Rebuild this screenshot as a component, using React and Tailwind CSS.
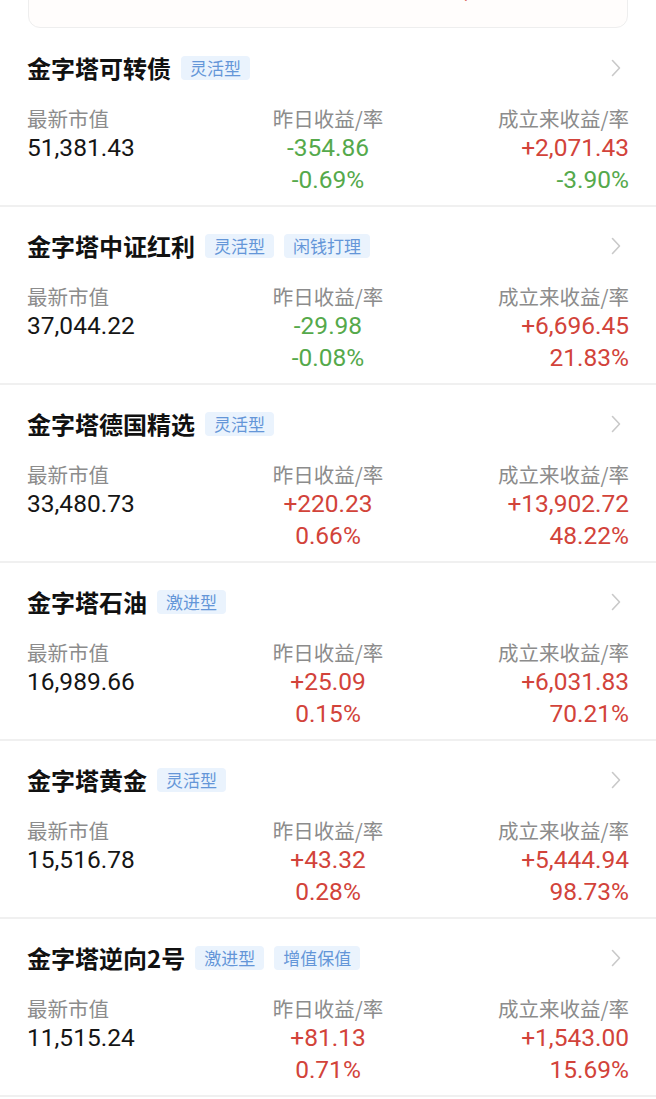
import React from 'react';

const funds = [
    { name: '金字塔可转债', tags: ['灵活型'], value: '51,381.43', day: '-354.86', dayRate: '-0.69%', total: '+2,071.43', totalRate: '-3.90%' },
    { name: '金字塔中证红利', tags: ['灵活型', '闲钱打理'], value: '37,044.22', day: '-29.98', dayRate: '-0.08%', total: '+6,696.45', totalRate: '21.83%' },
    { name: '金字塔德国精选', tags: ['灵活型'], value: '33,480.73', day: '+220.23', dayRate: '0.66%', total: '+13,902.72', totalRate: '48.22%' },
    { name: '金字塔石油', tags: ['激进型'], value: '16,989.66', day: '+25.09', dayRate: '0.15%', total: '+6,031.83', totalRate: '70.21%' },
    { name: '金字塔黄金', tags: ['灵活型'], value: '15,516.78', day: '+43.32', dayRate: '0.28%', total: '+5,444.94', totalRate: '98.73%' },
    { name: '金字塔逆向2号', tags: ['激进型', '增值保值'], value: '11,515.24', day: '+81.13', dayRate: '0.71%', total: '+1,543.00', totalRate: '15.69%' },
];

const numCls = "font-['Roboto','Noto_Sans_CJK_SC',sans-serif] text-[24.5px] leading-[32px]";
const labelCls = 'text-[20.5px] leading-[28px] text-[#8c8c8c]';

const tone = (v) => (v.startsWith('-') ? 'text-[#55a94b]' : 'text-[#d2433a]');

const Chevron = () => (
    <svg width="10" height="18" viewBox="0 0 10 18" fill="none">
        <path d="M1.5 1.5L8.5 9L1.5 16.5" stroke="#c9c9c9" strokeWidth="1.6" strokeLinecap="round" strokeLinejoin="round" />
    </svg>
);

const FundRow = ({ fund }) => (
    <div>
        <div className="px-[27px] pt-[23px] pb-[9px]">
            <div className="flex items-center h-[32px]">
                <span className="text-[24px] font-bold text-[#111111] leading-[32px]">{fund.name}</span>
                <div className="flex gap-[10px] ml-[10px]">
                    {fund.tags.map((t) => (
                        <span key={t} className="h-[24px] px-[9px] rounded-[4px] bg-[#eaf3fd] text-[#6496d8] text-[17px] leading-[24px]">
                            {t}
                        </span>
                    ))}
                </div>
                <div className="ml-auto mr-[8px] flex items-center">
                    <Chevron />
                </div>
            </div>

            <div className="grid grid-cols-3 mt-[20px]">
                <div>
                    <div className={labelCls}>最新市值</div>
                    <div className={`${numCls} text-[#151515]`}>{fund.value}</div>
                </div>
                <div className="text-center">
                    <div className={labelCls}>昨日收益/率</div>
                    <div className={`${numCls} ${tone(fund.day)}`}>{fund.day}</div>
                    <div className={`${numCls} ${tone(fund.dayRate)}`}>{fund.dayRate}</div>
                </div>
                <div className="text-right">
                    <div className={labelCls}>成立来收益/率</div>
                    <div className={`${numCls} ${tone(fund.total)}`}>{fund.total}</div>
                    <div className={`${numCls} ${tone(fund.totalRate)}`}>{fund.totalRate}</div>
                </div>
            </div>
        </div>
        <div className="h-[2px] bg-[#f0f0f0]" />
    </div>
);

export default function App() {
    return (
        <div className="w-[656px] h-[1099px] overflow-hidden bg-white font-['Noto_Sans_CJK_SC','Noto_Sans',sans-serif]">
            {/* summary card, scrolled mostly out of view */}
            <div className="h-[29px] overflow-hidden px-[28px]">
                <div className="-mt-[60px] h-[88px] rounded-[12px] border border-[#eeeeee] bg-[#fffdfc] flex items-end pb-[21px]">
                    <span className={`${numCls} ml-[132px] text-[#7cc06a]`}>-384.84</span>
                    <span className={`${numCls} ml-[180px] text-[#d2433a]`}>+35,871.43</span>
                </div>
            </div>

            {funds.map((f) => (
                <FundRow key={f.name} fund={f} />
            ))}
        </div>
    );
}
